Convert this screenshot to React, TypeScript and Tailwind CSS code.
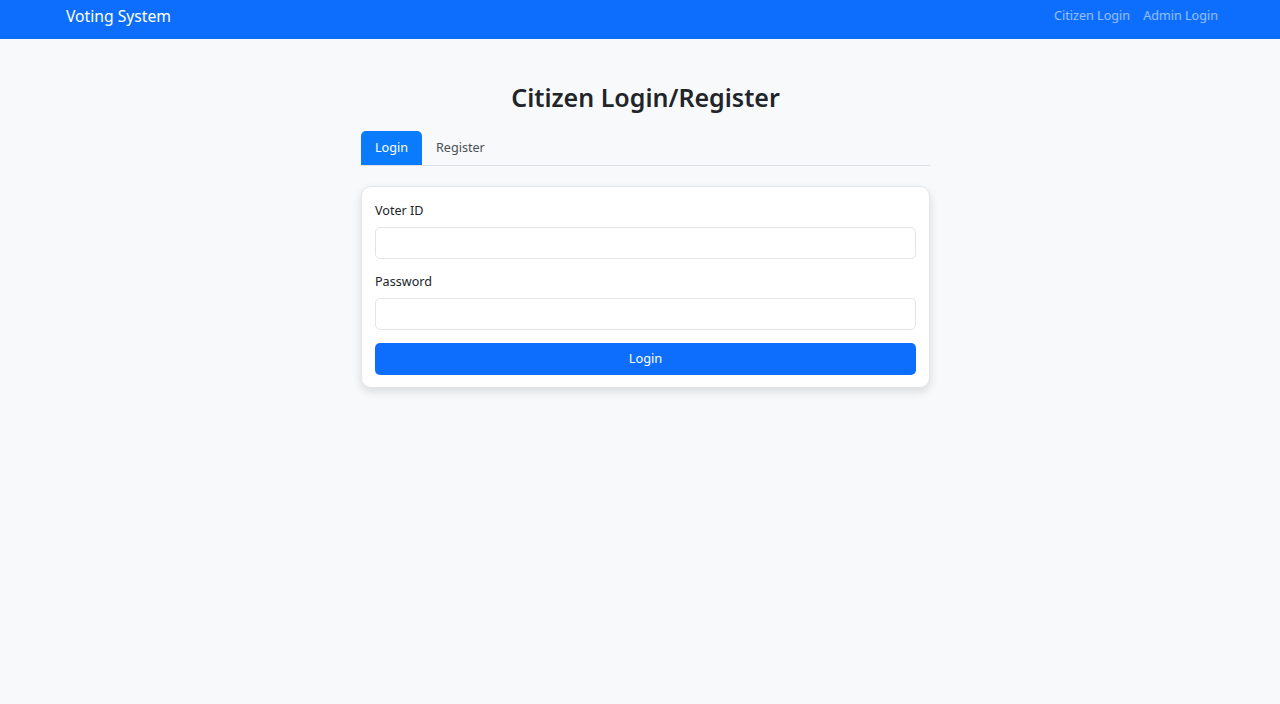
import React, { useState } from 'react';

const App = () => {
  const [tab, setTab] = useState<'login' | 'register'>('login');

  return (
    <div className="min-h-screen bg-[#f8f9fa] font-['Noto_Sans','Open_Sans',sans-serif] text-[#212529]">
      {/* Navbar */}
      <nav className="h-[39px] bg-[#0d6efd] flex items-start justify-between pt-[6px] pl-[66px] pr-[62px]">
        <span className="text-white text-[15.7px] leading-[20px]">Voting System</span>
        <div className="flex items-center gap-[13px] text-[12.6px] leading-[20px] text-white/55">
          <span>Citizen Login</span>
          <span>Admin Login</span>
        </div>
      </nav>

      <div className="flex justify-center pl-[11px]">
        <div className="w-[569px] pt-[38px]">
          <h1 className="text-center text-[25px] font-semibold leading-[40px]">Citizen Login/Register</h1>

          {/* Tabs */}
          <div className="mt-[14px] flex border-b border-[#dee2e6]">
            <button
              onClick={() => setTab('login')}
              className={`h-[34px] px-[14px] text-[12.6px] rounded-t-[5px] ${tab === 'login' ? 'bg-[#0b7bfd] text-white' : 'text-[#495057]'}`}
            >
              Login
            </button>
            <button
              onClick={() => setTab('register')}
              className={`h-[34px] px-[14px] text-[12.6px] rounded-t-[5px] ${tab === 'register' ? 'bg-[#0b7bfd] text-white' : 'text-[#495057]'}`}
            >
              Register
            </button>
          </div>

          {/* Card */}
          <div className="mt-[20px] bg-white border border-[#e3e5e8] rounded-[10px] shadow-[0_4px_10px_rgba(0,0,0,0.12)] px-[13px] pt-[14px] pb-[12px]">
            <label className="block text-[12.6px] leading-[20px] mb-[6px]">Voter ID</label>
            <input className="block w-full h-[32px] rounded-[5px] border border-[#e3e5e8] bg-white px-3 text-[13px] outline-none" />
            <label className="block text-[12.6px] leading-[20px] mt-[13px] mb-[6px]">Password</label>
            <input type="password" className="block w-full h-[32px] rounded-[5px] border border-[#e3e5e8] bg-white px-3 text-[13px] outline-none" />
            <button className="mt-[13px] w-full h-[32px] rounded-[5px] bg-[#0d6efd] text-white text-[12.8px]">Login</button>
          </div>
        </div>
      </div>
    </div>
  );
};

export default App;
